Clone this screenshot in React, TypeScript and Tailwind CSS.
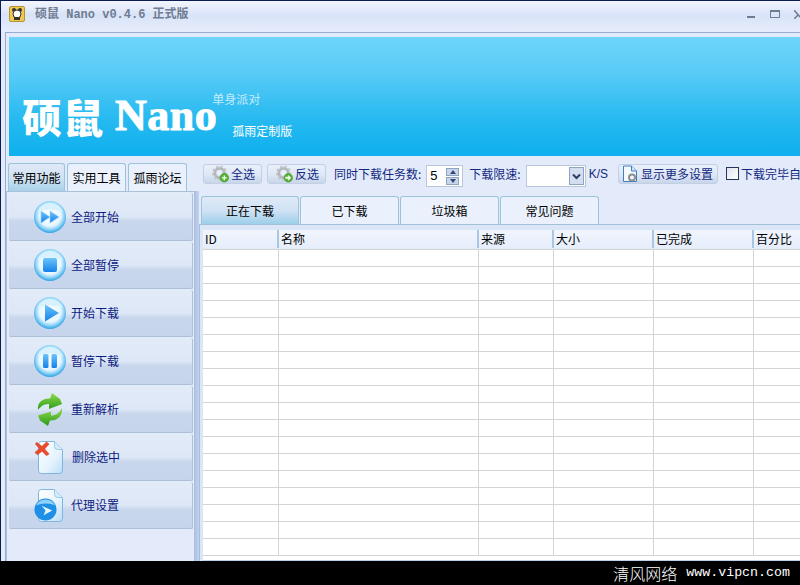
import React from "react";

const cjk = "font-['Noto_Sans_CJK_SC','Liberation_Sans',sans-serif]";

function Glass({ children }: { children: React.ReactNode }) {
  return (
    <svg width="34" height="34" viewBox="0 0 34 34">
      <defs>
        <radialGradient id="gl" cx="50%" cy="45%" r="55%">
          <stop offset="0" stopColor="#ffffff" />
          <stop offset="0.62" stopColor="#e6f6fe" />
          <stop offset="0.8" stopColor="#8fd4f7" />
          <stop offset="1" stopColor="#2f9fe6" />
        </radialGradient>
        <linearGradient id="gb" x1="0" y1="0" x2="0" y2="1">
          <stop offset="0" stopColor="#6cc6fa" />
          <stop offset="1" stopColor="#1580ea" />
        </linearGradient>
      </defs>
      <circle cx="17" cy="17" r="16" fill="url(#gl)" />
      <path d="M4 12a14 14 0 0 1 26 0a20 10 0 0 0-26 0z" fill="#d8f1fd" />
      {children}
    </svg>
  );
}

function FileShape() {
  return (
    <svg width="25" height="33" viewBox="0 0 25 33">
      <defs>
        <linearGradient id="fs" x1="0" y1="0" x2="1" y2="1">
          <stop offset="0" stopColor="#ffffff" />
          <stop offset="0.6" stopColor="#e6f3fd" />
          <stop offset="1" stopColor="#b9dcf6" />
        </linearGradient>
      </defs>
      <path d="M3.500 0.500h13l8 8v21a3 3 0 0 1-3 3h-18a3 3 0 0 1-3-3v-26a3 3 0 0 1 3-3z" fill="url(#fs)" stroke="#7fb5de" />
      <path d="M16.500 0.500v5a3 3 0 0 0 3 3h5" fill="#d6ebfb" stroke="#9cc8e8" />
    </svg>
  );
}

const sideItems: { label: string; icon: React.ReactNode; textGap: string }[] = [
  {
    label: "全部开始",
    textGap: "ml-[4px]",
    icon: (
      <Glass>
        <path d="M8 11l9 6-9 6zM17 11l9 6-9 6z" fill="url(#gb)" stroke="#8fd0f7" strokeWidth="0.6" />
      </Glass>
    ),
  },
  {
    label: "全部暂停",
    textGap: "ml-[4px]",
    icon: (
      <Glass>
        <rect x="10" y="10" width="14" height="14" rx="2" fill="url(#gb)" />
      </Glass>
    ),
  },
  {
    label: "开始下载",
    textGap: "ml-[4px]",
    icon: (
      <Glass>
        <path d="M12 8.500l14 8.500-14 8.500z" fill="url(#gb)" />
      </Glass>
    ),
  },
  {
    label: "暂停下载",
    textGap: "ml-[4px]",
    icon: (
      <Glass>
        <rect x="10" y="10" width="5.500" height="14" rx="1.500" fill="url(#gb)" />
        <rect x="18.500" y="10" width="5.500" height="14" rx="1.500" fill="url(#gb)" />
      </Glass>
    ),
  },
  {
    label: "重新解析",
    textGap: "ml-[4px]",
    icon: (
      <svg width="26" height="33" viewBox="0 0 26 33">
        <defs>
          <linearGradient id="gr" x1="0" y1="0" x2="0" y2="1">
            <stop offset="0" stopColor="#8fdc4a" />
            <stop offset="1" stopColor="#2c9a1c" />
          </linearGradient>
        </defs>
        <path d="M1 17C0 9 6 5 13 5.500L15 0l8 6 2 5-13 5 0-5c-5 0-8 2-11 6z" fill="url(#gr)" />
        <path d="M25 15c1 8-5 13-12 12.500L11 33 3 27.500l-2-5 13-4 0 4c5 0 8-2 11-7.500z" fill="url(#gr)" />
      </svg>
    ),
  },
  {
    label: "删除选中",
    textGap: "ml-[5px]",
    icon: (
      <div className="relative w-[25px] h-[33px]">
        <FileShape />
        <svg className="absolute left-[-4px] top-[0px]" width="16" height="16" viewBox="0 0 18 18">
          <path d="M3 1.500l6 4.500 5-5 3 2.500-5 5.500 5 5.500-3 2-5-5-5 4-3-2.500 5-4.500-4.500-5z" fill="#ea4b2a" stroke="#c9351c" strokeWidth="0.5" />
        </svg>
      </div>
    ),
  },
  {
    label: "代理设置",
    textGap: "ml-[4px]",
    icon: (
      <div className="relative w-[25px] h-[33px]">
        <FileShape />
        <svg className="absolute left-[-4px] top-[9px]" width="23" height="23" viewBox="0 0 24 24">
          <circle cx="12" cy="12" r="11.500" fill="#1d8fe6" />
          <path d="M2 8a11 11 0 0 1 20 0c-5-3-14-3-20 0z" fill="#8ed0f6" />
          <path d="M8 8l11 5-9 5 2-5z" fill="#e6f6fe" />
        </svg>
      </div>
    ),
  },
];

function Gear({ badge }: { badge: "plus" | "arrow" }) {
  return (
    <svg width="19" height="18" viewBox="0 0 20 18">
      <circle cx="9" cy="8" r="5" fill="none" stroke="#b3b8bc" strokeWidth="3" />
      <circle cx="9" cy="8" r="7" fill="none" stroke="#c2c6ca" strokeWidth="2" strokeDasharray="2.600 2.200" />
      <circle cx="9" cy="8" r="2" fill="#eef1f4" />
      <circle cx="14" cy="13" r="4.500" fill="#55b52f" stroke="#2f8f20" strokeWidth="0.6" />
      {badge === "plus" ? (
        <path d="M14 10.500v5M11.500 13h5" stroke="#fff" strokeWidth="1.400" />
      ) : (
        <path d="M11 12h3v-2l3 3-3 3v-2h-3z" fill="#fff" />
      )}
    </svg>
  );
}

function ToolButton({ children, className }: { children: React.ReactNode; className: string }) {
  return (
    <div
      className={`h-[20px] flex items-center rounded-[3px] border border-[#c3d0e3] bg-[linear-gradient(#e9f0fa_0%,#dfe8f6_50%,#c9d6ea_100%)] text-[12px] text-[#13287f] ${className}`}
    >
      {children}
    </div>
  );
}

const cols: { w: string; label: string }[] = [
  { w: "w-[76px]", label: "ID" },
  { w: "w-[200px]", label: "名称" },
  { w: "w-[75px]", label: "来源" },
  { w: "w-[100px]", label: "大小" },
  { w: "w-[100px]", label: "已完成" },
  { w: "w-[100px]", label: "百分比" },
];

const rows = Array.from({ length: 18 }, (_, i) => i);

export default function App() {
  return (
    <div className={`w-[800px] h-[585px] bg-black overflow-hidden flex flex-col ${cjk}`}>
      <div className="h-[561px] flex flex-col border-l border-t border-[#0b1c52] bg-[#e3ebfb] overflow-hidden">
        {/* title */}
        <div className="h-[31px] shrink-0 flex items-start bg-[linear-gradient(#f2f5fe_0%,#d9e3f8_45%,#e6edfc_100%)]">
          <div className="ml-[8px] mt-[5px] w-[16px] h-[16px] rounded-[2px] bg-[#f0c850] border border-[#b59430] flex items-center justify-center">
            <svg width="12" height="14" viewBox="0 0 12 14">
              <circle cx="3" cy="3" r="2" fill="#333" />
              <circle cx="9" cy="3" r="2" fill="#333" />
              <circle cx="6" cy="7" r="4" fill="#fff" stroke="#333" />
              <rect x="3" y="10" width="6" height="3" fill="#333" />
            </svg>
          </div>
          <div className="ml-[10px] mt-[4px] text-[12px] leading-[20px] font-bold text-[#6f7c92] whitespace-pre font-['Liberation_Mono','Noto_Sans_CJK_SC',monospace]">
            硕鼠 Nano v0.4.6 正式版
          </div>
          <div className="ml-auto flex items-start">
            <div className="mt-[15px] w-[8px] h-[2px] bg-[#6f7c92]" />
            <div className="ml-[15px] mt-[9px] w-[10px] h-[8px] border border-[#6f7c92] border-t-2" />
            <svg className="ml-[14px] mt-[9px]" width="6" height="9" viewBox="0 0 6 9">
              <path d="M0 0l6 7M0 9l4-4" stroke="#6f7c92" strokeWidth="1.500" fill="none" />
            </svg>
          </div>
        </div>

        {/* client */}
        <div className="ml-[4px] flex-1 min-h-0 flex flex-col border-l border-t border-[#98abd0] bg-[#e3ebfb]">
          {/* banner */}
          <div className="ml-[3px] mt-[4px] h-[119px] shrink-0 flex items-start bg-[linear-gradient(#6ed5fb_0%,#58cbf6_30%,#25b9f0_70%,#0eb0ee_100%)] text-white">
            <div className="ml-[13px] mt-[55px] text-[40px] leading-[48px] font-black tracking-[1px]">硕鼠</div>
            <div className="ml-[11px] mt-[52px] text-[44px] leading-[54px] tracking-[0.5px] font-bold [-webkit-text-stroke:1px_white] font-['Liberation_Serif',serif]">
              Nano
            </div>
            <div className="flex flex-col ml-[-5px] mt-[54px]">
              <div className="text-[12px] leading-[16px] text-white/70">单身派对</div>
              <div className="ml-[20px] mt-[16px] text-[12px] leading-[16px]">孤雨定制版</div>
            </div>
          </div>

          <div className="flex-1 min-h-0 flex">
            {/* sidebar */}
            <div className="w-[188px] shrink-0 flex flex-col">
              <div className="h-[35px] shrink-0 flex items-end pl-[2px] gap-[2px]">
                <div className="w-[57px] h-[28px] rounded-t-[3px] border border-b-0 border-[#9cc3dc] bg-[linear-gradient(#dfe9f6_0%,#d2e2f3_50%,#a6d2ea_100%)] text-[12px] flex items-center justify-center text-black">
                  常用功能
                </div>
                <div className="w-[59px] h-[28px] rounded-t-[3px] border border-b-0 border-[#9cc3dc] bg-[#eaf1fc] text-[12px] flex items-center justify-center text-black">
                  实用工具
                </div>
                <div className="w-[59px] h-[28px] rounded-t-[3px] border border-b-0 border-[#9cc3dc] bg-[#eaf1fc] text-[12px] flex items-center justify-center text-black">
                  孤雨论坛
                </div>
              </div>
              <div className="flex-1 min-h-0 border-t border-l border-[#a9c1d9] pl-[2px] pt-[1px] flex flex-col gap-[1px] bg-[#e3ebfb]">
                {sideItems.map((it) => (
                  <div
                    key={it.label}
                    className="w-[184px] h-[47px] first:h-[48px] shrink-0 flex items-center rounded-[2px] border-b border-r border-[#aebfd8] bg-[linear-gradient(#e2ebf8_0%,#dde7f6_50%,#c9d7ed_60%,#c7d5ec_100%)]"
                  >
                    <div className="ml-[24px] w-[34px] flex justify-center shrink-0">{it.icon}</div>
                    <div className={`${it.textGap} text-[12px] text-[#0c1a80]`}>{it.label}</div>
                  </div>
                ))}
              </div>
            </div>

            {/* divider */}
            <div className="w-[5px] shrink-0 flex flex-col">
              <div className="h-[35px] shrink-0" />
              <div className="flex-1 bg-[linear-gradient(90deg,#a9bee0,#c3d2ee)]" />
            </div>

            {/* main */}
            <div className="flex-1 min-w-0 flex flex-col overflow-hidden">
              {/* toolbar */}
              <div className="h-[39px] shrink-0 flex items-start pt-[8px] pl-[4px] whitespace-nowrap">
                <ToolButton className="w-[59px] pl-[7px] gap-[1px] shrink-0">
                  <Gear badge="plus" />
                  全选
                </ToolButton>
                <ToolButton className="ml-[5px] w-[59px] pl-[7px] gap-[1px] shrink-0">
                  <Gear badge="arrow" />
                  反选
                </ToolButton>
                <div className="ml-[8px] leading-[20px] text-[12px] text-[#13287f] shrink-0">同时下载任务数:</div>
                <div className="ml-[5px] mt-[1px] w-[37px] h-[22px] shrink-0 border border-[#b9c6dc] bg-white flex items-center pl-[3px] text-[13px] text-black font-['Liberation_Sans',sans-serif]">
                  5
                  <div className="ml-auto mr-[3px] w-[13px] h-[17px] flex flex-col gap-[1px]">
                    <div className="h-[8px] bg-[#c8d5ea] border border-[#8ea4c4] flex items-center justify-center">
                      <div className="w-0 h-0 border-x-[3px] border-x-transparent border-b-[4px] border-b-[#33496e]" />
                    </div>
                    <div className="h-[8px] bg-[#c8d5ea] border border-[#8ea4c4] flex items-center justify-center">
                      <div className="w-0 h-0 border-x-[3px] border-x-transparent border-t-[4px] border-t-[#33496e]" />
                    </div>
                  </div>
                </div>
                <div className="ml-[6px] leading-[20px] text-[12px] text-[#13287f] shrink-0">下载限速:</div>
                <div className="ml-[5px] mt-[1px] w-[60px] h-[22px] shrink-0 border border-[#b9c6dc] bg-white flex justify-end items-center pr-[1px]">
                  <div className="w-[15px] h-[18px] bg-[#d3def0] border border-[#8ea4c4] flex items-center justify-center">
                    <svg width="9" height="7" viewBox="0 0 9 7">
                      <path d="M1 1.500l3.500 3.500L8 1.500" fill="none" stroke="#2c3f66" strokeWidth="2" />
                    </svg>
                  </div>
                </div>
                <div className="ml-[3px] leading-[20px] text-[12px] text-[#13287f] shrink-0 font-['Liberation_Sans',sans-serif]">K/S</div>
                <ToolButton className="ml-[10px] w-[100px] pl-[3px] gap-[3px] shrink-0">
                  <svg width="16" height="18" viewBox="0 0 16 18" className="shrink-0">
                    <path d="M1.500 1h8l5 5v10.500h-13z" fill="#f4f9fe" stroke="#3f7fc0" />
                    <path d="M9.500 1v5h5" fill="#cfe4f7" stroke="#3f7fc0" />
                    <circle cx="10" cy="12.500" r="3" fill="none" stroke="#8b8f92" strokeWidth="2" />
                  </svg>
                  显示更多设置
                </ToolButton>
                <div className="ml-[8px] mt-[3px] w-[13px] h-[13px] shrink-0 border border-[#25365f] bg-[linear-gradient(135deg,#dfe5ee,#ffffff)]" />
                <div className="ml-[2px] leading-[20px] text-[12px] text-[#13287f] shrink-0">下载完毕自</div>
              </div>

              {/* tabs */}
              <div className="h-[29px] shrink-0 flex items-end pl-[2px] gap-[1px]">
                <div className="w-[98px] h-[28px] rounded-t-[3px] border border-b-0 border-[#9cc3dc] bg-[linear-gradient(#dfe9f6_0%,#d0e2f4_50%,#9dcfe9_100%)] text-[12px] flex items-center justify-center text-black">
                  正在下载
                </div>
                {["已下载", "垃圾箱", "常见问题"].map((t) => (
                  <div
                    key={t}
                    className="w-[99px] h-[28px] rounded-t-[3px] border border-b-0 border-[#9cc3dc] bg-[#eaf1fc] text-[12px] flex items-center justify-center text-black"
                  >
                    {t}
                  </div>
                ))}
              </div>

              {/* table */}
              <div className="flex-1 min-h-0 border-t border-l border-[#a3c0d8] bg-[#dbe6f7] pt-[5px] pl-[3px] overflow-hidden">
                <div className="w-[651px] h-full bg-white flex flex-col">
                  <div className="h-[20px] shrink-0 flex border-b border-[#d4d4d0] bg-[#e3ebfb]">
                    {cols.map((c) => (
                      <div
                        key={c.label}
                        className={`${c.w} shrink-0 h-[18px] pl-[2px] border-r-2 border-[#a9c6e2] text-[12px] leading-[18px] text-black bg-[linear-gradient(#f1f5fd_0%,#e6edfb_100%)]`}
                      >
                        {c.label}
                      </div>
                    ))}
                  </div>
                  {rows.map((r) => (
                    <div key={r} className="h-[17px] shrink-0 flex border-b border-[#d4d4d0]">
                      {cols.map((c) => (
                        <div key={c.label} className={`${c.w} shrink-0 border-r border-[#d4d4d0]`} />
                      ))}
                    </div>
                  ))}
                  <div className="flex-1" />
                  <div className="h-[1px] shrink-0 bg-[#bcd0e8]" />
                </div>
              </div>
            </div>
          </div>
        </div>
      </div>

      {/* watermark */}
      <div className="h-[24px] shrink-0 flex items-center justify-end pr-[10px] text-white whitespace-pre">
        <span className="text-[16px] font-light">清风网络</span>
        <span className="ml-[9px] text-[13.3px] font-['Liberation_Mono',monospace]">www.vipcn.com</span>
      </div>
    </div>
  );
}
